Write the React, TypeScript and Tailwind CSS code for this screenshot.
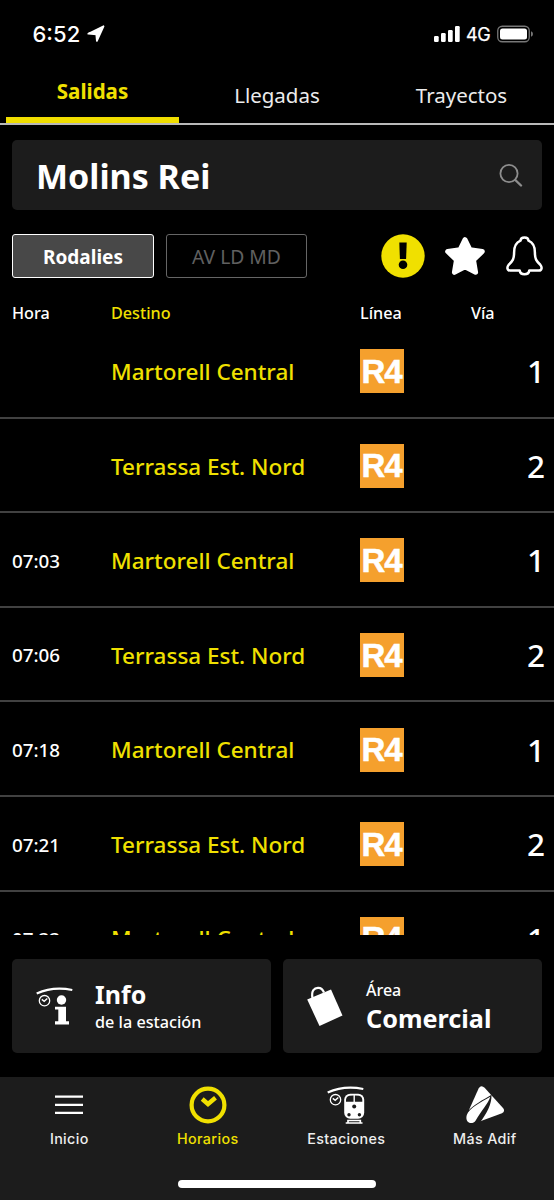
import React from "react";

type Departure = { time: string; destination: string; platform: string };

const departures: Departure[] = [
  { time: "", destination: "Martorell Central", platform: "1" },
  { time: "", destination: "Terrassa Est. Nord", platform: "2" },
  { time: "07:03", destination: "Martorell Central", platform: "1" },
  { time: "07:06", destination: "Terrassa Est. Nord", platform: "2" },
  { time: "07:18", destination: "Martorell Central", platform: "1" },
  { time: "07:21", destination: "Terrassa Est. Nord", platform: "2" },
  { time: "07:33", destination: "Martorell Central", platform: "1" },
];

function StatusBar() {
  return (
    <div className="flex h-[68px] items-center justify-between pl-[32.5px] pr-[20px] font-['Inter',sans-serif] text-white">
      <div className="flex items-center gap-[6px]">
        <span className="w-[48px] text-[22px] font-medium leading-none">6:52</span>
        <svg width="18" height="18" viewBox="0 0 18 18" fill="#fff" stroke="#fff" strokeWidth="1.800" strokeLinejoin="round">
          <path d="M16.500 1.300 9.900 15.900 9.300 9.300 1.300 8.700Z" />
        </svg>
      </div>
      <div className="flex items-center">
        <svg width="26" height="16" viewBox="0 0 26 16" fill="#fff">
          <rect x="0" y="10" width="4.700" height="6" rx="1.200" />
          <rect x="7" y="7" width="4.700" height="9" rx="1.200" />
          <rect x="14" y="4" width="4.700" height="12" rx="1.200" />
          <rect x="21" y="0" width="4.700" height="16" rx="1.200" />
        </svg>
        <span className="ml-[6px] w-[25px] pt-[1px] text-[18px] leading-none tracking-[-0.3px] [-webkit-text-stroke:0.25px_white]">4G</span>
        <svg className="ml-[6px]" width="37" height="18" viewBox="0 0 37 18">
          <rect x=".75" y="1.250" width="31.500" height="15.500" rx="4.500" fill="none" stroke="#777" strokeWidth="1.300" />
          <rect x="3" y="3.500" width="27" height="11" rx="2.500" fill="#fff" />
          <path d="M34 6.200Q36 7 36 9T34 11.800Z" fill="#777" />
        </svg>
      </div>
    </div>
  );
}

function SearchIcon() {
  return (
    <svg width="24" height="24" viewBox="0 0 24 24" fill="none" stroke="#8d8d8d" strokeLinecap="round">
      <circle cx="10" cy="10.500" r="8.600" strokeWidth="1.800" />
      <path d="m16.300 17 5.700 5.500" strokeWidth="2.400" />
    </svg>
  );
}

function AlertIcon() {
  return (
    <svg width="44" height="44" viewBox="0 0 44 44">
      <circle cx="22" cy="22" r="21.700" fill="#f0e000" />
      <path d="M18.300 8.500h7.400l-.6 16.500h-6.200Z" fill="#000" />
      <circle cx="22" cy="30.800" r="4.300" fill="#000" />
    </svg>
  );
}

function StarIcon() {
  return (
    <svg width="42" height="40" viewBox="0 0 42 40">
      <path d="M21 3.700 26 13.800 38.300 15.500 29.500 24 31.600 36.300 21 30.800 10.400 36.300 12.500 24 3.700 15.500 16 13.800Z" fill="#fff" stroke="#fff" strokeWidth="5" strokeLinejoin="round" />
    </svg>
  );
}

function BellIcon() {
  return (
    <svg width="37" height="40" viewBox="0 0 37 40" fill="none" stroke="#fff" strokeWidth="2.500" strokeLinejoin="round" strokeLinecap="round">
      <path d="M14.500 4.600C14.800 .5 22.200 .5 22.500 4.600C27.500 6.600 28.900 10.800 28.900 16.500C28.900 23 30.200 25 34.300 28.700C36.300 31 36 34.500 33 34.500H23.300C22.600 39.600 14.400 39.600 13.700 34.500H4C1 34.500 .7 31 2.700 28.700C6.800 25 8.100 23 8.100 16.500C8.100 10.800 9.500 6.600 14.500 4.600Z" />
    </svg>
  );
}

function CanopyClock() {
  return (
    <>
      <path d="M.7 6.600Q17 -1 36.300 3" fill="none" stroke="#fff" strokeWidth="2.200" />
      <circle cx="8.500" cy="13.700" r="5.200" fill="none" stroke="#fff" strokeWidth="1.300" />
      <path d="M5.800 12.400 8.200 14.300 11.300 11.500" fill="none" stroke="#fff" strokeWidth="1.400" />
    </>
  );
}

function StationInfoIcon() {
  return (
    <svg width="38" height="38" viewBox="0 0 38 38">
      <CanopyClock />
      <circle cx="25.500" cy="13" r="4.700" fill="#fff" />
      <path d="M19 19.700h11V34.300h3v3.200H19v-3.200h3.300V22.500H19Z" fill="#fff" />
    </svg>
  );
}

function BagIcon() {
  return (
    <svg width="36" height="40" viewBox="0 0 36 40">
      <path d="M5.500 12C4 4.500 7.500 2 11 1.800C14.500 1.600 16 4 17 6.500" fill="none" stroke="#fff" strokeWidth="2.200" />
      <path d="M.2 13.500 24 3.600 35.500 29.500 12.500 40Z" fill="#fff" />
    </svg>
  );
}

function MenuIcon() {
  return (
    <svg width="28" height="38" viewBox="0 0 28 38" fill="#fff">
      <path d="M0 9.500h28v2.200H0ZM0 17.700h28v2.200H0ZM0 25.800h28v2.200H0Z" />
    </svg>
  );
}

function ClockIcon() {
  return (
    <svg width="38" height="38" viewBox="0 0 38 38" fill="none" stroke="#f0e000">
      <circle cx="19" cy="19" r="16.400" strokeWidth="4.200" />
      <path d="m13.200 13 5.800 5 7.500-6.200" strokeWidth="4.400" />
    </svg>
  );
}

function TrainIcon() {
  return (
    <svg width="38" height="38" viewBox="0 0 38 38">
      <CanopyClock />
      <rect x="17.200" y="7.700" width="20" height="25" rx="6" fill="#fff" />
      <path d="M19 15.800v-2Q19.300 10.300 22.500 9.700L26.500 9.500v6.300ZM27.900 15.800V9.500l4 .2Q35 10.300 35.300 13.800v2Z" fill="#1c1c1c" />
      <circle cx="27.200" cy="20.500" r="2" fill="#1c1c1c" />
      <circle cx="22" cy="28.700" r="1.700" fill="#1c1c1c" />
      <circle cx="32.400" cy="28.700" r="1.700" fill="#1c1c1c" />
      <path d="M21 33.800v3M33.300 33.800v3M18.700 37h16.800M20.500 34.500h13.500" stroke="#fff" strokeWidth="1.700" />
    </svg>
  );
}

function AdifIcon() {
  return (
    <svg width="38" height="38" viewBox="0 0 38 38" fill="#fff">
      <path d="M3 24 12.600 2.500Q15 -1.800 18.600 1.700L37 22Q39.500 25.300 36 27.200L14.300 35.300Z" />
      <path d="M1.500 25.700C7 19 17 14 25.500 8.800C25.800 18 21 27.500 13.500 37L0 38Z" fill="#1c1c1c" />
      <path d="M.8 29C3 22.300 15.500 16 24.300 10.800C22.500 17 14.500 26 9.700 34.500C6.300 39.500 -1.500 37 .8 29Z" />
    </svg>
  );
}

function Tabs() {
  return (
    <nav className="flex h-[57px] border-b-2 border-[#b9b9b9] px-[6px] text-[20.5px]">
      <div className="flex w-[173px] justify-center border-b-[6px] border-[#f0de00] pt-[9px] font-bold leading-[28px] text-[#f0e000]">Salidas</div>
      <div className="flex w-[196px] justify-center pt-[13px] leading-[28px] text-[#ececec]">Llegadas</div>
      <div className="flex w-[173px] justify-center pt-[13px] leading-[28px] text-[#ececec]">Trayectos</div>
    </nav>
  );
}

function DepartureRow({ time, destination, platform }: Departure) {
  return (
    <div className="flex h-[94.6px] shrink-0 items-center border-b-2 border-[#414141] pl-[12px] pr-[9px] pt-[2px]">
      <span className="w-[99px] pt-px text-[18.8px] font-medium">{time}</span>
      <span className="w-[249px] whitespace-nowrap pt-px text-[22.5px] font-medium text-[#f0e000]">{destination}</span>
      <span className="flex size-[44px] items-center justify-center bg-[#f5a02d] pr-[1px] font-['Liberation_Sans',sans-serif] text-[33px] font-bold leading-none tracking-[-1px] [-webkit-text-stroke:0.5px_white]">R4</span>
      <span className="ml-auto text-[31.5px] font-medium leading-[40px]">{platform}</span>
    </div>
  );
}

const navItems = [
  { label: "Inicio", icon: <MenuIcon />, color: "text-[#eee]" },
  { label: "Horarios", icon: <ClockIcon />, color: "text-[#f0e000]" },
  { label: "Estaciones", icon: <TrainIcon />, color: "text-[#eee]" },
  { label: "Más Adif", icon: <AdifIcon />, color: "text-[#eee]" },
];

export default function App() {
  return (
    <div className="flex h-[1200px] w-[554px] flex-col overflow-hidden bg-black font-['Noto_Sans',sans-serif] text-white">
      <StatusBar />
      <Tabs />

      <div className="mx-[12px] mt-[15px] flex h-[70px] shrink-0 items-center justify-between rounded-[5px] bg-[#1c1c1c] pl-[24px] pr-[19px]">
        <span className="pt-[2px] text-[34px] font-bold leading-none">Molins Rei</span>
        <SearchIcon />
      </div>

      <div className="mt-[24px] flex h-[44px] shrink-0 items-center pl-[12px] pr-[11px]">
        <button className="h-[44px] w-[142px] rounded-[3px] border-[1.5px] border-white bg-[#484848] pt-[2px] text-[19px] font-bold">Rodalies</button>
        <button className="ml-[12px] h-[44px] w-[141px] rounded-[3px] border border-[#666] pt-[2px] text-[19.3px] text-[#606060]">AV LD MD</button>
        <div className="ml-auto flex items-center">
          <AlertIcon />
          <span className="ml-[18.5px]"><StarIcon /></span>
          <span className="ml-[20.5px]"><BellIcon /></span>
        </div>
      </div>

      <div className="mt-[23px] flex h-[24px] shrink-0 items-center pl-[12px] text-[16.2px] font-medium">
        <span className="w-[99px]">Hora</span>
        <span className="w-[249px] text-[#f0e000]">Destino</span>
        <span className="w-[111px]">Línea</span>
        <span>Vía</span>
      </div>

      <div className="-mt-px flex h-[611px] shrink-0 flex-col overflow-hidden">
        {departures.map((departure, index) => (
          <DepartureRow key={index} {...departure} />
        ))}
      </div>

      <div className="mt-[24px] grid h-[94px] shrink-0 grid-cols-2 gap-[12px] px-[12px]">
        <div className="flex items-center rounded-[5px] bg-[#1c1c1c] pl-[24px]">
          <StationInfoIcon />
          <div className="ml-[21px] pt-[4px]">
            <div className="text-[25px] font-bold leading-[29px]">Info</div>
            <div className="text-[16.2px] font-medium leading-[27px]">de la estación</div>
          </div>
        </div>
        <div className="flex items-center rounded-[5px] bg-[#1c1c1c] pl-[24px]">
          <BagIcon />
          <div className="ml-[23px] pb-[2px]">
            <div className="text-[16px] font-medium leading-[26px]">Área</div>
            <div className="text-[25.2px] font-bold leading-[31px]">Comercial</div>
          </div>
        </div>
      </div>

      <footer className="mt-[24px] flex flex-1 flex-col items-center bg-[#1c1c1c]">
        <nav className="grid w-full grid-cols-4 pt-[9px]">
          {navItems.map((item) => (
            <div key={item.label} className={`flex flex-col items-center ${item.color}`}>
              {item.icon}
              <span className="mt-[5px] font-['Inter',sans-serif] text-[14.3px] font-medium leading-[20px] tracking-[0.36px]">{item.label}</span>
            </div>
          ))}
        </nav>
        <div className="mb-[12px] mt-auto h-[8px] w-[198px] rounded-full bg-white" />
      </footer>
    </div>
  );
}
